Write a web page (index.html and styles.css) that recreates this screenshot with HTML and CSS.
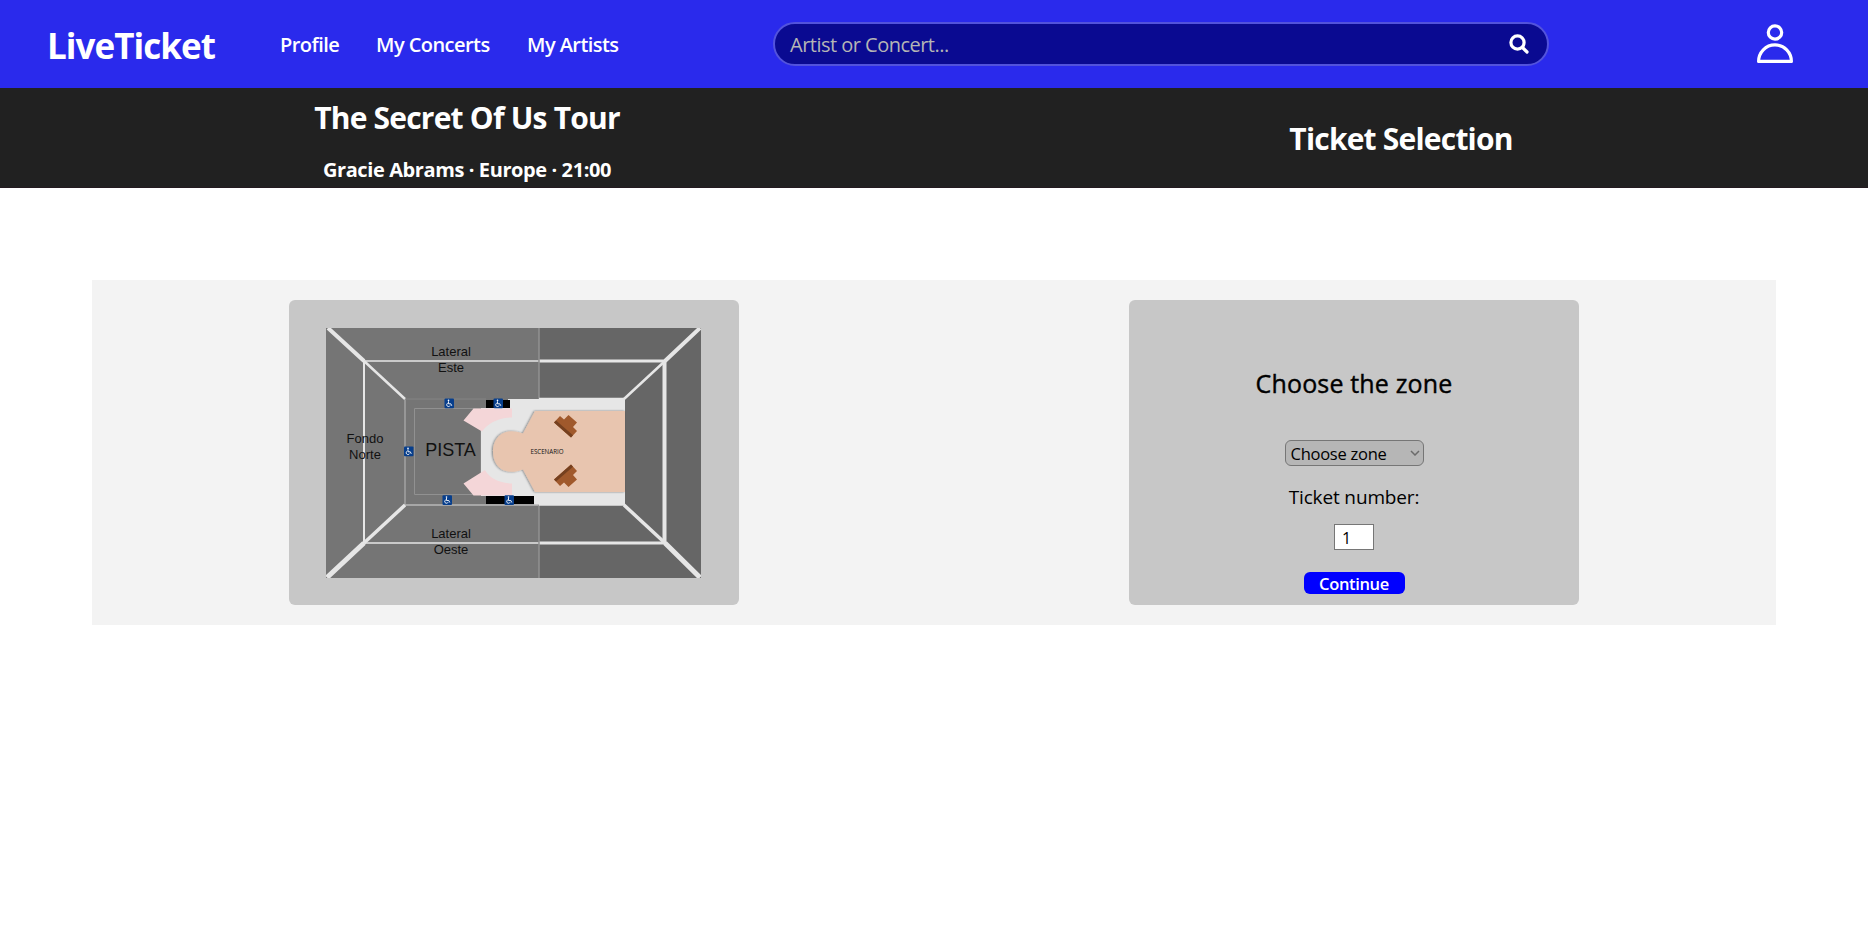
FILE: index.html
```html
<!DOCTYPE html>
<html lang="en">
<head>
<meta charset="utf-8">
<title>LiveTicket</title>
<link rel="stylesheet" href="styles.css">
</head>
<body>
<header class="topbar">
  <a class="brand">LiveTicket</a>
  <nav class="nav">
    <a class="nav-link profile">Profile</a>
    <a class="nav-link concerts">My Concerts</a>
    <a class="nav-link artists">My Artists</a>
  </nav>
  <div class="search">
    <span class="search-hint">Artist or Concert...</span>
    <svg class="search-icon" viewBox="0 0 20 20" fill="none" stroke="#fff" stroke-width="3.200" stroke-linecap="round"><circle cx="8.500" cy="8.500" r="6.600"/><path d="M13.500 13.500 18 18"/></svg>
  </div>
  <svg class="user-icon" viewBox="0 0 38 40" fill="none" stroke="#fff" stroke-width="3.200" stroke-linejoin="round"><circle cx="19" cy="8.500" r="6.700"/><path d="M2.600 37.400c0-9 7-16.500 16.400-16.500s16.400 7.500 16.400 16.500z"/></svg>
</header>
<section class="event">
  <div class="event-col">
    <h1 class="event-title">The Secret Of Us Tour</h1>
    <h3 class="event-info">Gracie Abrams · Europe · 21:00</h3>
  </div>
  <div class="event-col">
    <h1 class="event-step">Ticket Selection</h1>
  </div>
</section>
<main class="content">
  <div class="half">
    <div class="card map-card">
      <svg class="map" viewBox="0 0 375 250">
        <defs>
          <filter id="soft" x="-10%" y="-10%" width="120%" height="120%"><feDropShadow dx="-1" dy="0" stdDeviation="1" flood-opacity=".45"/></filter>
          <g id="access"><rect width="9.500" height="9.800" rx="1" fill="#073e8c"/><g fill="none" stroke="#fff" stroke-width=".9"><path d="M4 2.800v2.500h2.300l1 2"/><path d="M3.300 4.600a1.800 1.800 0 1 0 2.300 2.500"/></g><circle cx="4" cy="1.900" r=".8" fill="#fff"/></g>
          <g id="speaker"><path d="M0 7.500 6 1l4 3.500L14.500 0 23 7.500 19 12l4 4-6 6.500z" fill="#a0592c"/><path d="M0 7.500 2 5.500 19 20.300 17 22.500z" fill="#75401f"/></g>
        </defs>
        <rect width="375" height="250" fill="#666"/>
        <rect width="213" height="250" fill="#757575"/>
        <rect x="78.500" y="71" width="220" height="106" fill="#757575"/>
        <path d="M155 71H299V177H155z" fill="#e6e6e6"/>
        <path d="M78 71H182V80H155V168H208V177H78z" fill="#757575"/>
        <path d="M88.500 80.500H155V166.500H88.500z" fill="#757575" stroke="#919191"/>
        <path d="M155 80H186V168H155z" fill="#e6e6e6"/>
        <path d="M137.500 92.500 147.500 80.500H186V89.500C171 90 162 96 156 103.500z" fill="#f4d6d8"/>
        <path d="M137.500 155.500 147.500 167.500H186V155.500C171 155 163 149 159 142z" fill="#f4d6d8"/>
        <path d="M299 83H209L197 105.500C177 98 167 110 167 123.500S177 149 197 141.500L209 164H299z" fill="#e8c5af" filter="url(#soft)"/>
        <path d="M160 72H184V80H160zM160 168H208V176H160z"/>
        <g fill="none" stroke="#e6e6e6">
          <path d="M78 177H213" stroke="#b9b9b9" stroke-width="1.300"/>
          <path d="M38 33H213M38 215H213" stroke-width="1.500"/>
          <path d="M38 33V215" stroke-width="2"/>
          <path d="M213 33H339M213 215H339" stroke-width="3"/>
          <path d="M338.500 33V215" stroke-width="4"/>
          <path d="M79 71V177" stroke="#aaa" stroke-width="1.300"/>
          <path d="M78 71H160" stroke="#858585" stroke-width="1"/>
          <path d="M213 0V71M213 177V250" stroke="#919191" stroke-width="1.500"/>
          <path d="M213 70.500H298M213 177H298" stroke-width="1.500"/>
          <path d="M2 0 38 33M339 33 374 0" stroke-width="4"/>
          <path d="M38 33 79 71M339 33 298 71" stroke-width="2.500"/>
          <path d="M1 249.500 38 215M374 249.500 339 215" stroke-width="5"/>
          <path d="M38 215 79 177M339 215 298 177" stroke-width="3.500"/>
        </g>
        <use href="#access" x="118.500" y="70.500"/><use href="#access" x="167.500" y="70.500"/>
        <use href="#access" x="78" y="118.500"/><use href="#access" x="116.500" y="167.200"/><use href="#access" x="178.500" y="167.200"/>
        <use href="#speaker" x="228" y="87"/>
        <use href="#speaker" transform="translate(228 159) scale(1 -1)"/>
        <g class="map-labels">
          <text x="125" y="28">Lateral</text><text x="125" y="44">Este</text>
          <text x="39" y="115">Fondo</text><text x="39" y="131">Norte</text>
          <text x="125" y="210">Lateral</text><text x="125" y="226">Oeste</text>
          <text class="floor" x="124.500" y="128">PISTA</text>
          <text class="stage" x="221" y="126">ESCENARIO</text>
        </g>
      </svg>
    </div>
  </div>
  <div class="half">
    <form class="card form-card">
      <h2 class="form-title">Choose the zone</h2>
      <div class="zone-select"><span class="zone-label">Choose zone</span><svg class="chevron" viewBox="0 0 10 6"><path d="M1 1 5 5 9 1" fill="none" stroke="#6b6b6b" stroke-width="1.500"/></svg></div>
      <label class="count-label">Ticket number:</label>
      <div class="count">1</div>
      <div class="continue">Continue</div>
    </form>
  </div>
</main>
</body>
</html>
```
FILE: styles.css
```css
* { box-sizing: border-box; }
body { margin: 0; background: #fff; color: #000; font-family: "Segoe UI", "Open Sans", "Noto Sans", sans-serif; }
h1, h2, h3 { margin: 0; white-space: nowrap; }
.topbar { height: 88px; background: #2a2aec; color: #fff; display: flex; align-items: center; padding: 0 74px 0 47px; }
.brand { width: 233px; font-size: 35px; font-weight: 700; line-height: 46px; padding-top: 3px; letter-spacing: -0.95px; }
.nav { display: flex; width: 493px; font-size: 20px; font-weight: 600; line-height: 28px; white-space: nowrap; padding-top: 2px; }
.nav-link { letter-spacing: -0.55px; }
.profile { width: 96px; }
.concerts { width: 151px; }
.search { width: 776px; height: 44px; border: 2px solid #5353dc; border-radius: 22px; background: #0a0a91; display: flex; align-items: center; justify-content: space-between; padding: 0 18px 0 15px; }
.search-hint { font-size: 20px; color: #b5b5b5; line-height: 28px; letter-spacing: -0.52px; padding-top: 1px; }
.search-icon { width: 20px; height: 20px; }
.user-icon { width: 38px; height: 40px; margin-left: auto; }
.event { height: 100px; background: #212121; color: #fff; display: flex; border-bottom: 1px solid #241a20; }
.event-col { flex: 1; display: flex; flex-direction: column; align-items: center; }
.event-title, .event-step { font-size: 30px; line-height: 40px; letter-spacing: -0.8px; }
.event-title { margin-top: 10px; }
.event-step { margin-top: 31px; }
.event-info { font-size: 20px; line-height: 26px; margin-top: 19px; letter-spacing: -0.4px; }
.content { margin: 92px 92px 0; height: 345px; background: #f3f3f3; display: flex; padding: 20px 2px; }
.half { flex: 1; display: flex; justify-content: center; }
.card { width: 450px; height: 305px; border-radius: 6px; background: #c7c7c7; }
.map-card { padding: 28px 37px; }
.map { display: block; width: 375px; height: 250px; }
.map-labels { font-family: "Liberation Sans", Arial, sans-serif; font-size: 13px; text-anchor: middle; fill: #111; }
.floor { font-size: 18px; }
.stage { font-family: "Open Sans", sans-serif; font-size: 6.200px; }
.form-card { display: flex; flex-direction: column; align-items: center; }
.form-title { font-size: 25px; font-weight: 500; line-height: 34px; margin-top: 66px; letter-spacing: 0.15px; -webkit-text-stroke: 0.4px #000; }
.zone-select { width: 139px; height: 26px; margin-top: 40px; border: 1px solid #767676; border-radius: 6px; background: #b6b6b6; display: flex; align-items: center; justify-content: space-between; padding: 0 3px 0 5px; font-size: 16.500px; letter-spacing: -0.25px; }
.chevron { width: 10px; height: 6px; }
.count-label { font-size: 19px; line-height: 26px; margin-top: 18px; letter-spacing: -0.15px; }
.count { width: 40px; height: 26px; margin-top: 14px; border: 1px solid #767676; background: #fff; font-size: 16px; line-height: 27px; padding-left: 7px; }
.continue { width: 101px; height: 22px; margin-top: 22px; border-radius: 6px; background: #00f; color: #fff; font-size: 16.500px; font-weight: 600; line-height: 24px; text-align: center; letter-spacing: -0.35px; }
```
